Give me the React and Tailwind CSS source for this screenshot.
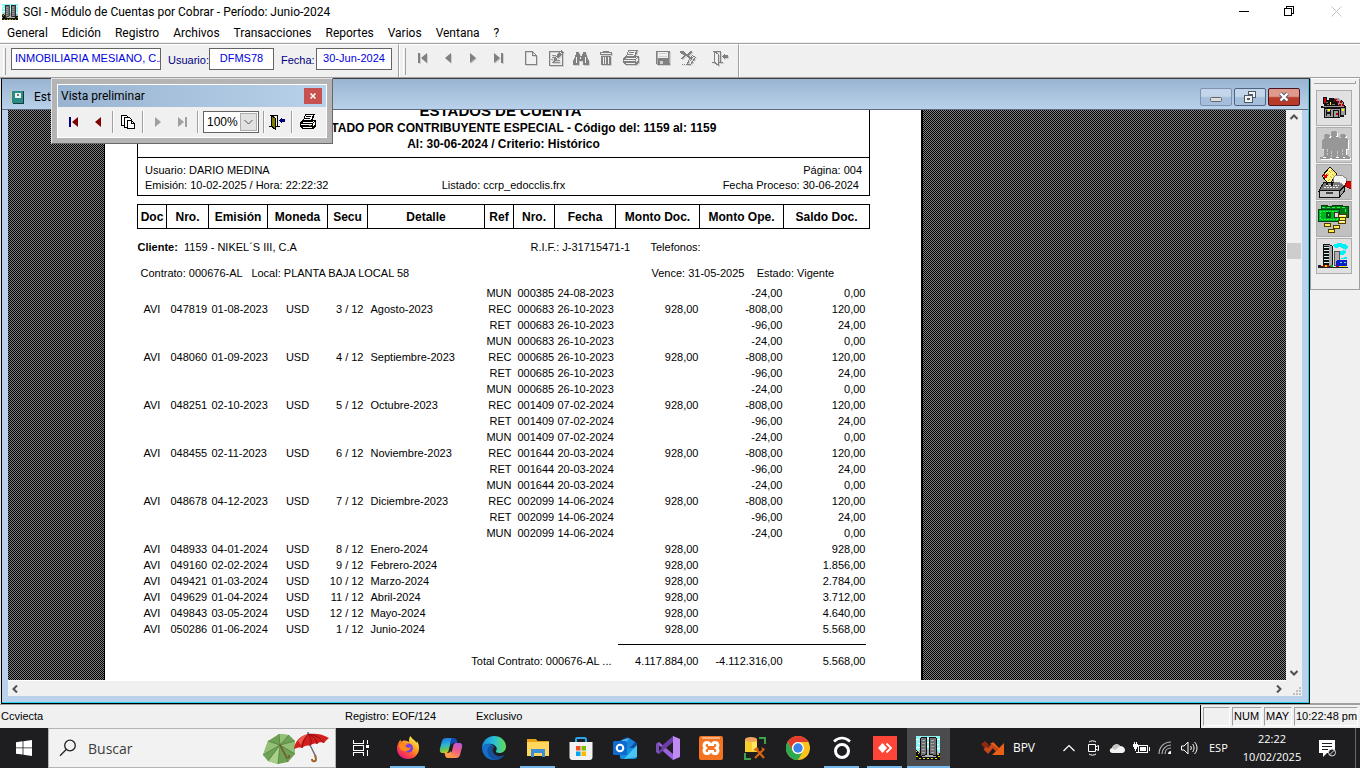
import React from "react";

const ui = "font-['Open_Sans','Noto_Sans',sans-serif]";
const caption = "font-[Roboto,'Noto_Sans',sans-serif]";

const rows = [
  ["", "", "", "", "", "", "MUN", "000385", "24-08-2023", "", "-24,00", "0,00"],
  ["AVI", "047819", "01-08-2023", "USD", "3 / 12", "Agosto-2023", "REC", "000683", "26-10-2023", "928,00", "-808,00", "120,00"],
  ["", "", "", "", "", "", "RET", "000683", "26-10-2023", "", "-96,00", "24,00"],
  ["", "", "", "", "", "", "MUN", "000683", "26-10-2023", "", "-24,00", "0,00"],
  ["AVI", "048060", "01-09-2023", "USD", "4 / 12", "Septiembre-2023", "REC", "000685", "26-10-2023", "928,00", "-808,00", "120,00"],
  ["", "", "", "", "", "", "RET", "000685", "26-10-2023", "", "-96,00", "24,00"],
  ["", "", "", "", "", "", "MUN", "000685", "26-10-2023", "", "-24,00", "0,00"],
  ["AVI", "048251", "02-10-2023", "USD", "5 / 12", "Octubre-2023", "REC", "001409", "07-02-2024", "928,00", "-808,00", "120,00"],
  ["", "", "", "", "", "", "RET", "001409", "07-02-2024", "", "-96,00", "24,00"],
  ["", "", "", "", "", "", "MUN", "001409", "07-02-2024", "", "-24,00", "0,00"],
  ["AVI", "048455", "02-11-2023", "USD", "6 / 12", "Noviembre-2023", "REC", "001644", "20-03-2024", "928,00", "-808,00", "120,00"],
  ["", "", "", "", "", "", "RET", "001644", "20-03-2024", "", "-96,00", "24,00"],
  ["", "", "", "", "", "", "MUN", "001644", "20-03-2024", "", "-24,00", "0,00"],
  ["AVI", "048678", "04-12-2023", "USD", "7 / 12", "Diciembre-2023", "REC", "002099", "14-06-2024", "928,00", "-808,00", "120,00"],
  ["", "", "", "", "", "", "RET", "002099", "14-06-2024", "", "-96,00", "24,00"],
  ["", "", "", "", "", "", "MUN", "002099", "14-06-2024", "", "-24,00", "0,00"],
  ["AVI", "048933", "04-01-2024", "USD", "8 / 12", "Enero-2024", "", "", "", "928,00", "", "928,00"],
  ["AVI", "049160", "02-02-2024", "USD", "9 / 12", "Febrero-2024", "", "", "", "928,00", "", "1.856,00"],
  ["AVI", "049421", "01-03-2024", "USD", "10 / 12", "Marzo-2024", "", "", "", "928,00", "", "2.784,00"],
  ["AVI", "049629", "01-04-2024", "USD", "11 / 12", "Abril-2024", "", "", "", "928,00", "", "3.712,00"],
  ["AVI", "049843", "03-05-2024", "USD", "12 / 12", "Mayo-2024", "", "", "", "928,00", "", "4.640,00"],
  ["AVI", "050286", "01-06-2024", "USD", "1 / 12", "Junio-2024", "", "", "", "928,00", "", "5.568,00"],
];

const cellClass = [
  "pl-[6px]",
  "pl-[4px]",
  "pl-[3px]",
  "text-center",
  "text-right pr-[4px]",
  "pl-[3px]",
  "text-right pr-[2px]",
  "pl-[4px]",
  "pl-[3px]",
  "text-right pr-[1px]",
  "text-right pr-[1px]",
  "text-right pr-[4px]",
];

const headers = ["Doc", "Nro.", "Emisión", "Moneda", "Secu", "Detalle", "Ref", "Nro.", "Fecha", "Monto Doc.", "Monto Ope.", "Saldo Doc."];

/* ---------- small drawings ---------- */

function Svg({ w = 18, h = 18, vb, crisp, className = "", children }) {
  return (
    <svg
      width={w}
      height={h}
      viewBox={vb || `0 0 ${w} ${h}`}
      fill="none"
      aria-hidden="true"
      shapeRendering={crisp ? "crispEdges" : undefined}
      className={"block shrink-0 " + className}
    >
      {children}
    </svg>
  );
}

const First = ({ bar, tri }) => (
  <Svg w={18} h={18}>
    <path d="M4 4h2v10H4z" fill={bar} />
    <path d="M13 4v10L7 9z" fill={tri} />
  </Svg>
);
const Prev = ({ tri }) => (
  <Svg w={18} h={18}>
    <path d="M12 4v10L6 9z" fill={tri} />
  </Svg>
);
const Next = ({ tri }) => (
  <Svg w={18} h={18}>
    <path d="M6 4v10l6-5z" fill={tri} />
  </Svg>
);
const Last = ({ bar, tri }) => (
  <Svg w={18} h={18}>
    <path d="M5 4v10l6-5z" fill={tri} />
    <path d="M12 4h2v10h-2z" fill={bar} />
  </Svg>
);
const Page = () => (
  <Svg w={18} h={18} crisp>
    <path d="M3.500 2.500h7l4 4v9h-11zM10.500 2.500v4h4" stroke="#808080" />
  </Svg>
);
const EditPage = () => (
  <Svg w={18} h={18} crisp>
    <path d="M2.500 2.500h13v14h-13z" stroke="#808080" />
    <path d="M5 6h4M5 8h3M5 13h8M9 11h4M4 10h2" stroke="#909090" />
    <path d="M14 1l3 2-8 9-3 2 1-4z" fill="#808080" />
    <path d="M13 3l2 2M9 8l2 2" stroke="#f0f0f0" />
  </Svg>
);
const Binoculars = () => (
  <Svg w={18} h={18} crisp>
    <path d="M4 3h3v2h1v2h2V5h1V3h3v3h1v3h1v2h1v5h-6v-4H7v4H1v-5h1V9h1V6h1z" fill="#808080" />
    <path d="M4.500 8v6M13.500 8v6M8.500 8v2" stroke="#f0f0f0" />
  </Svg>
);
const Trash = () => (
  <Svg w={18} h={18} crisp>
    <path d="M6 2h6v1h3v3H3V3h3zM4 7h10v9H4z" fill="#808080" />
    <path d="M6.500 8v7M8.500 8v7M11.500 8v7M4 4.500h10" stroke="#f0f0f0" />
  </Svg>
);
const Printer = ({ c, paper = "#f0f0f0", accent }) => (
  <Svg w={18} h={18} crisp>
    <path d="M6 1h10l-2 6h2l1 1v5l-3 3H3l-2-2V9l3-3h1z" fill={c} />
    <path d="M7 2h7l-2 5H5zM4 9h9l2-2v1l-2 2H3z" fill={paper} />
    <path d="M7 3.500h5M6 5.500h5" stroke={c} />
    <path d="M2 11h11v1H2zM4 14h9v1H4zM14 10l2-2v3l-2 2z" fill={paper} />
    {accent && <path d="M10 12h2v1h-2z" fill={accent} />}
  </Svg>
);
const Floppy = () => (
  <Svg w={18} h={18} crisp>
    <path d="M2 2h14v14H3l-1-1z" fill="#808080" />
    <path d="M4 3h10v6H4z" fill="#f0f0f0" />
    <path d="M5 4h8v1H5zM5 7h8v1H5zM6 12h3v3H6z" fill="#d0d0d0" />
    <path d="M3 3v12M15 4v10" stroke="#a8a8a8" />
  </Svg>
);
const Undo = () => (
  <Svg w={18} h={18} crisp>
    <path d="M1 2h3l4 3 4-3 1 1-3 3 2 3h-2l-3-2-4 3H2l3-4-4-2z" fill="#808080" />
    <path d="M13.500 6.500l3 2-5 7-3 0 1-4z" stroke="#808080" />
    <path d="M11 12l3-4" stroke="#808080" strokeDasharray="1 1" />
    <path d="M3 15.500h6" stroke="#808080" strokeDasharray="1 1" />
  </Svg>
);
const Exit = ({ line, door, arrow }) => (
  <Svg w={18} h={18} crisp>
    <path d="M2 2.500h8M9.500 2v11M1 13.500h3M7 13.500h5" stroke={line} />
    <path d="M3 2l4 3v11l-4-3z" fill={door} stroke={line} />
    <path d="M11 7l3-3v2h3v3h-3v2z" fill={arrow} />
  </Svg>
);
const Pages = () => (
  <Svg w={18} h={18} crisp>
    <path d="M2.500 2.500h5l2 2v8h-7z" fill="#fff" stroke="#000" />
    <path d="M5.500 4.500h5l2 2v8h-7z" fill="#fff" stroke="#000" />
    <path d="M8.500 7.500h4l3 3v5h-7zM12.500 7.500v3h3" fill="#fff" stroke="#000" />
  </Svg>
);

const Towers = ({ size }) => (
  <Svg w={size} h={size} vb="0 0 24 24" crisp>
    <path d="M0 0h24v24H0z" fill="#8ff4f4" />
    <path d="M0 3h3M2 7h3M0 11h4M10 2h3M10 6h3M10 10h3M20 3h4M20 8h3M21 12h3" stroke="#fff" />
    <path d="M0 17l5-4h15l4 5v6H0z" fill="#b0b0b0" />
    <path d="M0 14l4 3v3l3 2v2H0zM20 20l4-3v7h-4zM6 21h14v3H6z" fill="#111" />
    <path d="M4.500 2.500l1-1h5v17l-6 2z" fill="#707070" stroke="#111" />
    <path d="M13.500 1.500h6l1 1v17l-7-1z" fill="#707070" stroke="#111" />
    <path d="M6 4.500h3M6 7.500h3M6 10.500h3M6 13.500h3M6 16.500h3M15 4.500h3M15 7.500h3M15 10.500h3M15 13.500h3M15 16.500h3" stroke="#a8a8a8" />
    <path d="M0 15.500h1M2 17.500h1M0 20.500h2M3 22.500h2M7 22.500h2M11 22.500h2M15 22.500h2M19 22.500h2M22 20.500h2M22 18.500h1" stroke="#f0e000" />
  </Svg>
);

const House = () => (
  <Svg w={26} h={22} crisp>
    <path d="M2 0h4v3h2V1h9l5 3 2 5h1v9h-2v2h-4v1H3V11H0V9h3V7H2z" fill="#111" />
    <path d="M3 1h2v5H3z" fill="#c80000" />
    <path d="M13 1h4l5 4 1 5h-4l-3-5z" fill="#b08c8c" />
    <path d="M14 2h2v1h-2zM16 4h2v2h-2zM19 4h2v2h-2zM18 7h2v2h-2zM21 7h2v2h-2zM13 3h1v2h-1z" fill="#a00010" />
    <path d="M2 9h17v1H2zM4 12h15v8H4zM20 11h4v7h-4z" fill="#9c9c9c" />
    <path d="M9 5h1v3H9zM7 12h2v2H7zM21 12h2v2h-2z" fill="#ffff00" />
    <path d="M5 13h1v6H5zM9 13h1v6H9zM6 15h3v2H6zM12 13h1v7h-1zM12 13h6v1h-6zM17 13h1v7h-1z" fill="#111" />
    <path d="M15 16h2v2h-2z" fill="#c00000" />
    <path d="M5 5h2v1H5zM6 7h2v1H6zM11 7h3v1h-3z" fill="#777" />
  </Svg>
);
const People = () => (
  <Svg w={32} h={32} crisp className="drop-shadow-[1px_1px_0_#fff]">
    <path d="M14 2h4v1h1v4h-1v1h2l1 1h2V8h-1V6h1V5h4v1h1v2h-1v1h2l1 2v9h-2v6h2l1 2h1v2H2v-2h2l2-2v-6H4v-9l2-2h1V8H6V6h1V5h4v1h1v2h-1v1h1l1-1h1V7h-1V3h1z" fill="#979797" />
    <path d="M9.500 20v6M13.500 22v6M19.500 22v6M24.500 20v6" stroke="#c8c8c8" strokeDasharray="3 1" />
    <path d="M5 28h3M12 29h2M18 28h3M25 28h2" stroke="#fff" />
  </Svg>
);
const CardFile = () => (
  <Svg w={34} h={34} crisp>
    <path d="M5 11L13 2l7 7-8 11z" fill="#fff58a" stroke="#111" />
    <path d="M12 6l5 5M10 8l5 5M14 5l4 4M11 16l3-3" stroke="#e0b800" strokeDasharray="1 1" />
    <path d="M7 10l3 3M10 10l-3 3" stroke="#f00000" strokeWidth="2" />
    <path d="M7 17h21v4l-5 5H2z" fill="#777" stroke="#111" />
    <path d="M9 20h13M7 22h14" stroke="#eee" strokeDasharray="2 1" />
    <path d="M9 17h2v3H9zM14 17h2v4h-2z" fill="#111" />
    <path d="M16 13l3-3 5 0 5 3 2 6-3 2-5-3-6-1z" fill="#f4f4f4" stroke="#888" />
    <path d="M30 16h4v8l-6-3z" fill="#e00000" stroke="#900" />
    <path d="M2.500 25.500h20v7h-20z" fill="#c8c8c8" stroke="#111" />
    <path d="M22.500 26l5-5v5l-5 6z" fill="#999" stroke="#111" />
    <path d="M9 27h7v2H9z" fill="#444" />
  </Svg>
);
const Money = () => (
  <Svg w={34} h={32} crisp>
    <path d="M4 2h6v1h5V2h10v1h6v11h-6l-3 3H4z" fill="#007a16" stroke="#053d0c" />
    <path d="M1 6h21v12H1z" fill="#00b428" stroke="#053d0c" />
    <path d="M3 8h17v8H3z" stroke="#1dff3a" strokeDasharray="2 1" />
    <path d="M9 9h5v6H9z" fill="#024f0f" />
    <path d="M5 4h24M28 6v6" stroke="#1dff3a" strokeDasharray="3 2" />
    <path d="M11 11h1v2h-1z" fill="#1dff3a" />
    <path d="M17 9h4v5h-4z" fill="#ddd" stroke="#333" />
    <path d="M21.500 11.500h8v3h-8zM22.500 14.500h6v3h-6zM21.500 17.500h7v3h-7zM7.500 20.500h6v3h-6zM16.500 22.500h6v3h-6zM11.500 26.500h6v3h-6z" fill="#fff04a" stroke="#4c3c00" />
    <path d="M23 12.500h5M23 18.500h4" stroke="#fff" />
  </Svg>
);
const City = () => (
  <Svg w={32} h={28} crisp>
    <path d="M14 3l7-2 6 1 3 3-2 3-6-3-5 1zM20 10l6-2 3 2-4 3h-4zM23 16l6-1v2h-6z" fill="#00f0f8" />
    <path d="M5.500 2.500h6l3 2v20h-9z" fill="#a8a8a8" stroke="#111" />
    <path d="M6 4h5v20H6z" fill="#111" />
    <path d="M6 5.500h5M6 8.500h5M6 11.500h5M6 14.500h5M6 17.500h5M6 20.500h5" stroke="#d8f4f4" />
    <path d="M16 10l2-1h3v14h-5z" fill="#b0b0b0" stroke="#555" />
    <path d="M18 19l2-1h9v6H18z" fill="#0b1fc8" />
    <path d="M22 20.500h2M26 20.500h2" stroke="#7df" />
    <path d="M0 23h3v1h3v1h24v1H0z" fill="#222" />
    <path d="M5 23h6v2H5zM18 24h3v1h-3z" fill="#d00000" />
    <path d="M7 23h2v2H7zM22 24h6v1h-6z" fill="#ffe600" />
    <path d="M12 23h3v2h-3z" fill="#13a32a" />
  </Svg>
);

const Book = () => (
  <Svg w={13} h={14} crisp>
    <path d="M1 1h11v12H1z" fill="#2b8a84" />
    <path d="M12 1h1v13H2v-1h10z" fill="#0d3f3c" />
    <path d="M4 3h6v5H4z" fill="#e9f3f2" />
    <path d="M6 4h2v2H6z" fill="#777" />
    <path d="M.500 1v12" stroke="#e2d94c" strokeDasharray="1 1" />
  </Svg>
);

/* ---------- taskbar drawings ---------- */

const Firefox = () => (
  <Svg w={24} h={24}>
    <defs>
      <linearGradient id="ff" x1="20" y1="2" x2="5" y2="22" gradientUnits="userSpaceOnUse">
        <stop stopColor="#fff44f" />
        <stop offset=".4" stopColor="#ff9a1f" />
        <stop offset=".7" stopColor="#ff4a3c" />
        <stop offset="1" stopColor="#e31587" />
      </linearGradient>
    </defs>
    <path d="M12 23C5.500 23 1 18.500 1 12.500 1 9 2.500 6 4.500 3.500L5 6c1-1 2-1.500 3.500-1.500C10 5 12 5 13 6c0-3 0-4 1.500-6 1 3 4 3.500 5.500 6l.5 1 .500-2c1.500 2.500 2.300 5 2 8-.500 6-5 10-11 10z" fill="url(#ff)" />
    <circle cx="12.500" cy="12" r="4.500" fill="#7a3fe0" />
    <path d="M3 9c2.500-2.500 6-2 8.500-.500-2 .500-2.500 1.500-1.500 2.500 2 1.500 4 .500 5 0-1 4-5.500 5.500-8 3.500C5 15 3 12 3 9z" fill="#ff8a1c" />
  </Svg>
);
const Copilot = () => (
  <Svg w={24} h={24}>
    <defs>
      <linearGradient id="cpa" x1="3" y1="2" x2="6" y2="18" gradientUnits="userSpaceOnUse">
        <stop stopColor="#1d6fe0" />
        <stop offset=".45" stopColor="#28b5d8" />
        <stop offset=".75" stopColor="#6ac44a" />
        <stop offset="1" stopColor="#f3c526" />
      </linearGradient>
      <linearGradient id="cpb" x1="20" y1="6" x2="14" y2="22" gradientUnits="userSpaceOnUse">
        <stop stopColor="#b058e8" />
        <stop offset=".5" stopColor="#ee5b8c" />
        <stop offset="1" stopColor="#ff9a4c" />
      </linearGradient>
    </defs>
    <path d="M7 2h8c-2 0-2.500 1-3 3L9.500 15c-.500 1.500-1.500 2-3 2H4c-3 0-3.500-2-3-4.500L3 5c.500-2 2-3 4-3z" fill="url(#cpa)" />
    <path d="M12.500 2H15c2 0 2.500 1 3 3l.500 2H16c-2 0-3 .500-3.500 2L11 7z" fill="#1549b4" />
    <path d="M17 22H9c2 0 2.500-1 3-3l2.500-10c.500-1.500 1.500-2 3-2H20c3 0 3.500 2 3 4.500L21 19c-.500 2-2 3-4 3z" fill="url(#cpb)" />
    <path d="M11.500 22H9c-2 0-2.500-1-3-3l-.500-2H8c2 0 3-.500 3.500-2l1.500 2z" fill="#ff9a4c" />
  </Svg>
);
const Edge = () => (
  <Svg w={24} h={24}>
    <defs>
      <linearGradient id="eg" x1="2" y1="8" x2="23" y2="8" gradientUnits="userSpaceOnUse">
        <stop stopColor="#1793e0" />
        <stop offset=".5" stopColor="#2bc0d4" />
        <stop offset="1" stopColor="#5edc5a" />
      </linearGradient>
    </defs>
    <path d="M0 11.500C.500 5 5.500 0 12 0c7 0 12 5 12 10.500 0 4-3 6.500-6.500 6.500-2.500 0-4-1-3.500-2 1.200-1.300 1-3.500-.500-5C10 6.500 3 7 0 11.500z" fill="url(#eg)" />
    <path d="M0 11.500C2 8 7 7 10.500 9 8.500 10 7.500 12 7.500 14c0 4.500 4 8.500 9 7.500l5-2C19.500 22.500 16 24 12 24 5 24 0 18.500 0 11.500z" fill="#1470cc" />
    <path d="M10.500 9C7 9.500 5 12.500 5.500 16c.500 4 3.500 7 7.500 7.800 4 0 7.500-2 9.500-5-4 2.500-10 1.500-11.500-2.800-.800-2.500 0-4.500 1.500-5.500z" fill="#164f9c" />
  </Svg>
);
const Explorer = () => (
  <Svg w={24} h={24}>
    <path d="M1 3h9l1.500 2H23v4H1z" fill="#e8a317" />
    <path d="M1 6h22v14H1z" fill="#ffd75e" />
    <path d="M5 13h14v8h-3v-4H8v4H5z" fill="#3a8fd8" />
  </Svg>
);
const Store = () => (
  <Svg w={24} h={24}>
    <path d="M7 6V3.500C7 2.500 7.500 2 8.500 2h7c1 0 1.500.500 1.500 1.500V6" stroke="#28a8ea" strokeWidth="2" />
    <path d="M.500 6h23v15c0 2-1 3-3 3h-17c-2 0-3-1-3-3z" fill="#f2f2f2" />
    <path d="M7 10h4.500v4.500H7z" fill="#f25022" />
    <path d="M12.500 10H17v4.500h-4.500z" fill="#7fba00" />
    <path d="M7 15.500h4.500V20H7z" fill="#00a4ef" />
    <path d="M12.500 15.500H17V20h-4.500z" fill="#ffb900" />
  </Svg>
);
const Outlook = () => (
  <Svg w={24} h={24}>
    <path d="M4 6l10-5 10 6v5H4z" fill="#0f4f9e" />
    <path d="M9 4l7-2 5 5-9 8-5-3z" fill="#4db8f5" />
    <path d="M16 2l6 4-7 8-4-4z" fill="#1a83dc" />
    <path d="M7 12h17v8c0 2-1 3-3 3H9c-1.500 0-2-1-2-2z" fill="#1490df" />
    <path d="M24 9v12L11 23z" fill="#48c4f5" />
    <rect y="5" width="14" height="14" rx="1.500" fill="#0f6bd0" />
    <circle cx="7" cy="12" r="3.300" stroke="#fff" strokeWidth="2" />
  </Svg>
);
const VisualStudio = () => (
  <Svg w={24} h={24}>
    <path d="M0 8l3-2 14 12v6L0 9z" fill="#9a63dd" />
    <path d="M0 16l3 2L17 6V0L0 15z" fill="#6a3fa6" />
    <path d="M0 8l3-2v12l-3-2z" fill="#7b4fb8" />
    <path d="M17 0l7 3v18l-7 3z" fill="#c08af5" />
    <path d="M17 7v10l-6-5z" fill="#1f1f1f" />
    <path d="M3 9.500L6 12l-3 3z" fill="#1f1f1f" />
  </Svg>
);
const Xampp = () => (
  <Svg w={24} h={24}>
    <rect width="24" height="24" rx="2" fill="#f37321" />
    <path d="M3 1h18v2H3z" fill="#f8b27f" />
    <path d="M8 6.500c-3 0-4 3.500-1.500 5.500C4 14 5 17.500 8 17.500c2 0 2.500-1 2.500-2h3c0 1 .500 2 2.500 2 3 0 4-3.500 1.500-5.500C20 10 19 6.500 16 6.500c-2 0-2.500 1-2.500 2h-3c0-1-.500-2-2.500-2z" stroke="#fff" strokeWidth="3" />
  </Svg>
);
const DbTool = () => (
  <Svg w={24} h={24}>
    <path d="M16 2h6v6M2 17v6h6" stroke="#3ea34a" strokeWidth="2" />
    <path d="M2 3h12v13H2z" fill="#f5cd2e" />
    <ellipse cx="8" cy="3.500" rx="6" ry="2.500" fill="#f1a660" />
    <path d="M9 6h5v9H9z" fill="#ffe45c" />
    <path d="M12 22l9-9M13 13l8 9" stroke="#d8620e" strokeWidth="2.200" />
    <path d="M10 14l4-3 2 2-2 2zM18 11l4 2-2 2z" fill="#d8620e" />
  </Svg>
);
const Chrome = () => (
  <Svg w={24} h={24}>
    <circle cx="12" cy="12" r="12" fill="#fcc31e" />
    <path d="M1.600 6A12 12 0 0 1 22.400 6H12a6 6 0 0 0-5.200 9z" fill="#e33b2e" />
    <path d="M1.600 6A12 12 0 0 0 12 24l5.200-9A6 6 0 0 1 6.800 15z" fill="#2da94f" />
    <circle cx="12" cy="12" r="6" fill="#fff" />
    <circle cx="12" cy="12" r="4.700" fill="#3b82ea" />
  </Svg>
);
const RingApp = () => (
  <Svg w={24} h={24}>
    <circle cx="12" cy="15" r="6.500" stroke="#fff" strokeWidth="3" />
    <path d="M4 5.500c5-4.500 11-4.500 16 0" stroke="#fff" strokeWidth="2.600" />
  </Svg>
);
const AnyDesk = () => (
  <Svg w={24} h={24}>
    <path d="M0 0h24v24H0z" fill="#ff4438" />
    <path d="M9.500 7L14 12l-4.500 5L5 12z" fill="#fff" />
    <path d="M13.500 7.500l4.500 4.500-4.500 4.500" stroke="#fff" strokeWidth="1.800" />
  </Svg>
);

const apps = [
  ["Firefox", Firefox, 1],
  ["Copilot", Copilot, 0],
  ["Edge", Edge, 0],
  ["Explorador de archivos", Explorer, 1],
  ["Store", Store, 0],
  ["Outlook", Outlook, 0],
  ["Visual Studio", VisualStudio, 0],
  ["XAMPP", Xampp, 0],
  ["Base de datos", DbTool, 0],
  ["Chrome", Chrome, 0],
  ["Asistente", RingApp, 1],
  ["AnyDesk", AnyDesk, 1],
];

const Umbrellas = () => (
  <Svg w={68} h={34}>
    <path d="M1 24L6 10l11-7 10 1 6 6 0 13-7 8-10 2-10-3z" fill="#6fa154" />
    <path d="M1 24L18 14 6 10zM17 3l1 11L27 4zM33 10l-15 4 15 9z" fill="#94bf76" />
    <path d="M18 14l-2 19L6 30z" fill="#a9cf88" />
    <path d="M18 14L1 24M18 14L6 10M18 14l-1-11M18 14l9-10M18 14l15-4M18 14l15 9M18 14l-2 19M18 14L6 30M18 14l8 17" stroke="#4b7a38" strokeWidth=".700" />
    <path d="M18 14l6 11c1 3 4 2 3-1" stroke="#7d5a34" strokeWidth="1.600" />
    <path d="M32 18c1-8 6-13 14-15 8-1 15 0 21 4-2 2-4 3-5 5-3-1-5-1-7 1-3-1-5 0-7 2-3-1-6 0-8 2-3-1-5 0-8 1z" fill="#d3201f" />
    <path d="M40 17c1-6 3-10 6-14M48 15c2-4 1-8-2-12M55 13c0-4-4-8-9-10M62 12c-3-5-9-8-16-9" stroke="#8e0e10" />
    <path d="M36 10c2-4 6-6 10-7-4 4-6 7-7 11z" fill="#f0564c" />
    <path d="M46 1v2M48 14l6 12" stroke="#6d6d78" strokeWidth="1.500" />
    <path d="M53 24l1 4c0 3-4 3-4 0" stroke="#a2622c" strokeWidth="2" />
  </Svg>
);

/* ---------- pieces ---------- */

function TitleBar() {
  return (
    <header className="flex h-[23px] shrink-0 items-center bg-white pl-[2px]">
      <Towers size={16} />
      <h1 className={"pl-[5px] text-[12px] leading-[16px] text-black " + caption}>SGI - Módulo de Cuentas por Cobrar - Período: Junio-2024</h1>
      <div className="ml-auto flex">
        <button aria-label="Minimizar" className="flex h-[22px] w-[45px] items-center justify-center">
          <Svg w={11} h={11} crisp><path d="M0 5.500h10" stroke="#000" /></Svg>
        </button>
        <button aria-label="Restaurar" className="flex h-[22px] w-[45px] items-center justify-center">
          <Svg w={11} h={11} crisp><path d="M.500 2.500h7v7h-7zM2.500 2V.500h7v7H8" stroke="#000" /></Svg>
        </button>
        <button aria-label="Cerrar" className="flex h-[22px] w-[48px] items-center justify-center">
          <Svg w={11} h={11}><path d="M.500.500l10 10M10.500.500l-10 10" stroke="#c4c4c4" /></Svg>
        </button>
      </div>
    </header>
  );
}

function MenuBar() {
  const items = ["General", "Edición", "Registro", "Archivos", "Transacciones", "Reportes", "Varios", "Ventana", "?"];
  return (
    <nav className={"flex h-[19px] shrink-0 items-center gap-[14px] bg-white pl-[7px] text-[12px] leading-[16px] text-black " + caption}>
      {items.map((t) => (
        <button key={t}>{t}</button>
      ))}
    </nav>
  );
}

const Grip = () => <span className="h-[27px] w-[3px] shrink-0 border-r border-l border-r-[#a0a0a0] border-l-white" />;

const field = "h-[22px] border border-[#646464] bg-white pb-[3px] text-[11px] text-[#0000e0] outline-none";

function Toolbar() {
  const tools = [
    ["Primero", <First bar="#808080" tri="#808080" />],
    ["Anterior", <Prev tri="#808080" />],
    ["Siguiente", <Next tri="#808080" />],
    ["Último", <Last bar="#808080" tri="#808080" />],
  ];
  const edit = [
    ["Nuevo", <Page />],
    ["Modificar", <EditPage />],
    ["Buscar registro", <Binoculars />],
    ["Eliminar", <Trash />],
    ["Imprimir", <Printer c="#808080" />],
  ];
  const save = [
    ["Guardar", <Floppy />],
    ["Deshacer", <Undo />],
  ];
  const tb = "flex h-[20px] w-[25px] items-center justify-center drop-shadow-[1px_1px_0_#d0d0d0]";
  const group = (list) =>
    list.map(([name, icon]) => (
      <button key={name} aria-label={name} className={tb}>
        {icon}
      </button>
    ));
  return (
    <div className="flex h-[36px] shrink-0 flex-col bg-[#f0f0f0] pt-px font-['Liberation_Sans',Arial,sans-serif] text-[11px] text-[#000080]">
      <div className="flex flex-1 border-y border-[#a0a0a0]">
        <div className="flex w-[399px] items-start border-t border-r border-t-white border-r-[#a0a0a0] pt-[3px] pl-[3px]">
          <Grip />
          <input aria-label="Empresa" readOnly defaultValue="INMOBILIARIA MESIANO, C.A" className={field + " ml-[5px] w-[150px] pl-[3px]"} />
          <label htmlFor="usuario" className="w-[48px] pt-[4px] pl-[7px]">Usuario:</label>
          <input id="usuario" readOnly defaultValue="DFMS78" className={field + " w-[65px] px-0 text-center"} />
          <label htmlFor="fecha" className="w-[42px] pt-[4px] pl-[7px]">Fecha:</label>
          <input id="fecha" readOnly defaultValue="30-Jun-2024" className={field + " w-[76px] px-0 text-center"} />
        </div>
        <div className="flex w-[340px] items-start border-t border-r border-l border-t-white border-r-[#a0a0a0] border-l-white pt-[3px] pl-[3px]">
          <Grip />
          <div className="flex pl-[4px]">{group(tools)}</div>
          <div className="flex pl-[8px]">{group(edit)}</div>
          <div className="flex pl-[7px]">{group(save)}</div>
          <div className="flex pl-[7px]">{group([["Salir", <Exit line="#808080" door="#f0f0f0" arrow="#808080" />]])}</div>
        </div>
        <div className="flex-1 border-t border-l border-white" />
      </div>
    </div>
  );
}

function PreviewPalette() {
  const pb = "flex h-[24px] w-[24px] items-center justify-center";
  const sep = <span className="h-[22px] w-[2px] border-r border-l border-r-white border-l-[#a0a0a0]" />;
  return (
    <section className="absolute top-0 left-[51px] z-10 flex h-[66px] w-[282px] flex-col border border-t-[#e3e3e3] border-r-[#696969] border-b-[#696969] border-l-[#e3e3e3] bg-[#b4b4b4] p-[5px] text-black">
      <div className="flex flex-1 flex-col border border-white bg-[#f0f0f0]">
        <div className="flex h-[22px] items-center justify-between bg-linear-to-r from-[#99b4d1] to-[#b9d1ea] pr-[4px] pl-[3px]">
          <h2 className={"text-[12px] leading-[16px] " + caption}>Vista preliminar</h2>
          <button aria-label="Cerrar vista preliminar" className="flex h-[16px] w-[18px] items-center justify-center bg-[#c75050]">
            <Svg w={6} h={6}><path d="M.500.500l5 5M5.500.500l-5 5" stroke="#fff" strokeWidth="1.500" /></Svg>
          </button>
        </div>
        <div className="flex flex-1 items-center pl-[4px]">
          <button aria-label="Primera página" className={pb}><First bar="#000080" tri="#800000" /></button>
          <button aria-label="Página anterior" className={pb}><Prev tri="#800000" /></button>
          <span className="flex px-[2px]">{sep}</span>
          <button aria-label="Ir a página" className={pb}><Pages /></button>
          <span className="flex px-[2px]">{sep}</span>
          <button aria-label="Página siguiente" className={pb}><Next tri="#a0a0a0" /></button>
          <button aria-label="Última página" className={pb}><Last bar="#a0a0a0" tri="#a0a0a0" /></button>
          <span className="flex pr-[4px] pl-[3px]">{sep}</span>
          <div className="relative">
            <select aria-label="Zoom" className="block h-[22px] w-[56px] appearance-none border border-[#646464] bg-white pl-[3px] text-[12px] outline-none">
              <option>100%</option>
            </select>
            <span className="pointer-events-none absolute top-[2px] right-[2px] flex h-[18px] w-[17px] items-center justify-center border border-[#adadad] bg-[#e1e1e1]">
              <Svg w={9} h={6}><path d="M.500 1l4 4 4-4" stroke="#555" /></Svg>
            </span>
          </div>
          <span className="flex pl-[4px]">{sep}</span>
          <button aria-label="Cerrar informe" className={pb}><Exit line="#000" door="#808000" arrow="#000080" /></button>
          <span className="flex pr-[3px] pl-[2px]">{sep}</span>
          <button aria-label="Imprimir informe" className={pb}><Printer c="#000" paper="#fff" accent="#808000" /></button>
        </div>
      </div>
    </section>
  );
}

function Report() {
  return (
    <article className="ml-[96px] w-[819px] shrink-0 border-r-2 border-l border-black bg-white pl-[32px] text-[11px] leading-[16px] text-black">
      <div className="w-[733px]">
        <div className="-mt-2 border-x border-b border-black pb-[5px] text-center text-[12px] font-bold">
          <h2 className="pr-[6px] text-[15px] leading-[18px] whitespace-pre">ESTADOS DE CUENTA</h2>
          <p className="pl-[22px]">LISTADO POR CONTRIBUYENTE ESPECIAL - Código del: 1159 al: 1159</p>
          <p>Al: 30-06-2024 / Criterio: Histórico</p>
        </div>
        <div className="grid grid-cols-3 border-x border-b border-black px-[7px] pt-[5px] pb-[2px] leading-[15px]">
          <p className="col-span-2">Usuario: DARIO MEDINA</p>
          <p className="text-right">Página: 004</p>
          <p>Emisión: 10-02-2025 / Hora: 22:22:32</p>
          <p className="text-center">Listado: ccrp_edocclis.frx</p>
          <p className="pr-[3px] text-right">Fecha Proceso: 30-06-2024</p>
        </div>
        <table className="mt-[8px] w-full table-fixed border-collapse">
          <colgroup>
            <col className="w-[29px]" />
            <col className="w-[42px]" />
            <col className="w-[59px]" />
            <col className="w-[60px]" />
            <col className="w-[40px]" />
            <col className="w-[117px]" />
            <col className="w-[29px]" />
            <col className="w-[41px]" />
            <col className="w-[61px]" />
            <col className="w-[84px]" />
            <col className="w-[84px]" />
            <col />
          </colgroup>
          <thead>
            <tr className="h-[24px] text-[12px]">
              {headers.map((h, i) => (
                <th key={i} className="border border-black p-0 text-center font-bold whitespace-nowrap">
                  {h}
                </th>
              ))}
            </tr>
          </thead>
          <tbody className="whitespace-pre">
            <tr className="h-[36px]">
              <td colSpan={7} className="p-0"><b>Cliente:</b>{"  1159 - NIKEL´S III, C.A"}</td>
              <td colSpan={3} className="p-0 pl-[17px]">R.I.F.: J-31715471-1</td>
              <td colSpan={2} className="p-0">
                <div className="-ml-[49px]">Telefonos:</div>
              </td>
            </tr>
            <tr className="h-[20px]">
              <td colSpan={9} className="p-0 pb-[4px] pl-[3px]">{"Contrato: 000676-AL   Local: PLANTA BAJA LOCAL 58"}</td>
              <td colSpan={3} className="p-0 pb-[4px] pl-[36px]">{"Vence: 31-05-2025    Estado: Vigente"}</td>
            </tr>
            {rows.map((r, i) => (
              <tr key={i} className="h-[16px]">
                {r.map((c, j) => (
                  <td key={j} className={"py-0 " + cellClass[j]}>{c}</td>
                ))}
              </tr>
            ))}
          </tbody>
          <tfoot className="whitespace-nowrap">
            <tr className="h-[8px]">
              <td colSpan={9} className="p-0" />
              <td colSpan={3} className="p-0 pr-[4px] pl-[2px]">
                <div className="h-[8px] border-b border-black" />
              </td>
            </tr>
            <tr className="h-[32px]">
              <td colSpan={9} className="p-0 pr-[4px] text-right">Total Contrato: 000676-AL ...</td>
              <td className="p-0 pr-[1px] text-right">4.117.884,00</td>
              <td className="p-0 pr-[1px] text-right">-4.112.316,00</td>
              <td className="p-0 pr-[4px] text-right">5.568,00</td>
            </tr>
          </tfoot>
        </table>
      </div>
    </article>
  );
}

function ReportWindow() {
  const cap = "flex h-[18px] w-[32px] items-center justify-center rounded-[2px] border bg-linear-to-b from-[#c3d5ea] from-45% to-[#a5bedb] to-55%";
  return (
    <section className="flex min-w-0 flex-1 flex-col border-t border-l border-t-[#404040] border-l-[#e8e8e8]">
      <div className="flex min-h-0 flex-1 flex-col border-r border-b border-l border-black">
        <div className="flex min-h-0 flex-1 flex-col border-r border-b border-[#27d3ee] bg-[#b9d1ea] pb-[6px]">
          <div className="flex h-[30px] shrink-0 items-center bg-linear-to-b from-[#99b4d1] to-[#b9d1ea] pt-[5px] pr-[8px] pl-[9px]">
            <Book />
            <h2 className={"pl-[10px] text-[12px] text-black " + caption}>Est</h2>
            <div className="ml-auto flex gap-[2px]">
              <button aria-label="Minimizar ventana" className={cap + " border-[#7b93ae]"}>
                <Svg w={12} h={12}><rect x=".5" y="6.500" width="11" height="4" rx="1" fill="#ddd" stroke="#666" /></Svg>
              </button>
              <button aria-label="Restaurar ventana" className={cap + " border-[#4f6480]"}>
                <Svg w={12} h={12} crisp>
                  <path d="M4.500 3.500v-3h7v6h-3v-3z" fill="#f4f4f4" stroke="#4d5866" />
                  <path d="M.500 4.500h8v7h-8z" fill="#f4f4f4" stroke="#4d5866" />
                  <path d="M3.500 7.500h2v1h-2z" stroke="#4d5866" />
                </Svg>
              </button>
              <button aria-label="Cerrar ventana" className="flex h-[18px] w-[32px] items-center justify-center rounded-[2px] border border-[#4a1420] bg-linear-to-b from-[#e09a8c] from-45% to-[#b93a28] to-55%">
                <Svg w={12} h={10}>
                  <path d="M2.500 1.500l7 7M9.500 1.500l-7 7" stroke="#565a66" strokeWidth="4" />
                  <path d="M2.500 1.500l7 7M9.500 1.500l-7 7" stroke="#fff" strokeWidth="2.300" />
                </Svg>
              </button>
            </div>
          </div>
          <div className="flex min-h-0 flex-1 border-t border-[#5b6b7d] pr-[6px] pl-[6px]">
            <div className="flex min-w-0 flex-1 flex-col">
              <div className="flex min-h-0 flex-1 overflow-hidden bg-[conic-gradient(#808080_25%,#000_0_50%,#808080_0_75%,#000_0)] bg-[length:2px_2px]">
                <Report />
              </div>
              <div className="flex h-[16px] shrink-0 items-center justify-between border-t border-white bg-[#f0f0f0] px-[4px]">
                <button aria-label="Desplazar a la izquierda"><Svg w={6} h={8}><path d="M5 .500L1.500 4 5 7.500" stroke="#505050" strokeWidth="2" /></Svg></button>
                <button aria-label="Desplazar a la derecha"><Svg w={6} h={8}><path d="M1 .500L4.500 4 1 7.500" stroke="#505050" strokeWidth="2" /></Svg></button>
              </div>
            </div>
            <div className="flex w-[16px] shrink-0 flex-col items-center bg-[#f0f0f0] pt-[4px]">
              <button aria-label="Desplazar arriba"><Svg w={8} h={6}><path d="M.500 5L4 1.500 7.500 5" stroke="#505050" strokeWidth="2" /></Svg></button>
              <div className="flex w-full flex-1 flex-col items-center">
                <span className="flex-3" />
                <span className="h-[16px] w-[14px] bg-[#cdcdcd]" />
                <span className="flex-10" />
              </div>
              <button aria-label="Desplazar abajo"><Svg w={8} h={6}><path d="M.500 1L4 4.500 7.500 1" stroke="#505050" strokeWidth="2" /></Svg></button>
              <Svg w={16} h={20} crisp>
                <path d="M13 11h2v2h-2zM10 14h2v2h-2zM13 14h2v2h-2zM7 17h2v2H7zM10 17h2v2h-2zM13 17h2v2h-2z" fill="#bfbfbf" />
              </Svg>
            </div>
          </div>
        </div>
      </div>
    </section>
  );
}

function SidePanel() {
  const items = [
    ["Inmuebles", House, "bg-[#e1e1e1]"],
    ["Clientes", People, "bg-[#cccccc]"],
    ["Archivo", CardFile, "bg-[#c0c0c0]"],
    ["Cobros", Money, "bg-[#c0c0c0]"],
    ["Locales", City, "bg-[#e1e1e1]"],
  ];
  return (
    <aside className="w-[50px] shrink-0 border-b border-b-[#a0a0a0] bg-[#f0f0f0]">
      <div className="flex flex-col items-center gap-px border border-t-white border-r-[#a0a0a0] border-b-[#a0a0a0] border-l-[#a0a0a0] pt-[2px] pb-[15px]">
        <span className="mb-[5px] h-[3px] w-[42px] border-r border-b border-[#a0a0a0]" />
        {items.map(([name, Icon, bg]) => (
          <button key={name} aria-label={name} className={"mr-[2px] flex h-[36px] w-[36px] items-center justify-center border border-[#adadad] " + bg}>
            <Icon />
          </button>
        ))}
      </div>
    </aside>
  );
}

function StatusBar() {
  const cell = "flex h-[19px] items-center border border-t-[#a0a0a0] border-r-white border-b-white border-l-[#a0a0a0] pl-px whitespace-nowrap";
  return (
    <footer className="flex h-[24px] shrink-0 items-center border-t border-[#a0a0a0] bg-[#f0f0f0] font-['Liberation_Sans',Arial,sans-serif] text-[11px] text-black">
      <span className="w-[345px] pl-px">Ccviecta</span>
      <span className="w-[131px]">Registro: EOF/124</span>
      <span>Exclusivo</span>
      <div className="ml-auto flex h-full items-center gap-[2px] border-l border-black pr-[2px] pl-[2px]">
        <span className={cell + " w-[27px]"} />
        <span className={cell + " w-[30px]"}>NUM</span>
        <span className={cell + " w-[28px]"}>MAY</span>
        <span className={cell + " w-[64px]"}>10:22:48 pm</span>
      </div>
    </footer>
  );
}

function Taskbar() {
  const tray = "flex w-[24px] justify-center";
  return (
    <div className="flex h-[40px] shrink-0 bg-[#1e1e20] text-white">
      <button aria-label="Inicio" className="flex w-[48px] items-center justify-center">
        <Svg w={16} h={16}><path d="M0 2.200L6.600 1.300v6.200H0zM7.400 1.200L16 0v7.500H7.400zM0 8.300h6.600v6.300L0 13.700zM7.400 8.300H16V16l-8.600-1.200z" fill="#fff" /></Svg>
      </button>
      <label className="flex w-[288px] items-center border border-[#b4b4b4] bg-[#f2f2f2] pl-[10px]">
        <Svg w={18} h={18}><circle cx="11" cy="6.500" r="5.300" stroke="#222" strokeWidth="1.300" /><path d="M7.200 10.500L1 16.800" stroke="#222" strokeWidth="1.300" /></Svg>
        <input aria-label="Buscar" placeholder="Buscar" className="ml-[11px] w-[150px] text-[14px] outline-none placeholder:text-[#3c3c3c]" />
        <span className="ml-auto pr-[5px]"><Umbrellas /></span>
      </label>
      <button aria-label="Vista de tareas" className="flex w-[50px] items-center justify-center">
        <Svg w={18} h={18} crisp><path d="M1.500 1v3.500h10V1M1.500 17v-3.500h10V17M1.500 6.500h10v5h-10zM15.500 1v4M15.500 11v6" stroke="#fff" /><path d="M14 6h3v3h-3z" fill="#fff" /></Svg>
      </button>
      <div className="grid w-[564px] grid-cols-13">
        {apps.map(([name, Icon, open]) => (
          <button key={name} aria-label={name} className="flex flex-col items-center">
            <span className="flex flex-1 items-center pt-[2px]"><Icon /></span>
            <span className={"h-[2px] w-[35px] " + (open ? "bg-[#76b9ed]" : "")} />
          </button>
        ))}
        <button aria-label="SGI" className="flex flex-col items-center bg-[#4b4b4d]">
          <span className="flex flex-1 items-center pt-[2px]"><Towers size={24} /></span>
          <span className="h-[2px] w-full bg-[#76b9ed]" />
        </button>
      </div>
      <div className="ml-auto flex items-center text-[12px]">
        <button className="flex items-center gap-[8px] pr-[22px]">
          <Svg w={24} h={16}>
            <path d="M0 4l4-3 4 4-3 5z" fill="#8c2a10" />
            <path d="M4 8l3 3 5-6 4 5" stroke="#c8461a" strokeWidth="4" />
            <path d="M9 3h4l8 8M23 3v12H11z" fill="#ee5f16" />
          </Svg>
          BPV
        </button>
        <button aria-label="Mostrar iconos ocultos" className={tray}><Svg w={12} h={8}><path d="M.500 7L6 1.500 11.500 7" stroke="#fff" strokeWidth="1.200" /></Svg></button>
        <button aria-label="Reunirse ahora" className={tray}><Svg w={14} h={16}><path d="M2.500 4.500h7v7h-7zM9.500 7l3-1.500v5L9.500 9M3 2c2-1.500 5-1.500 7 0M3 14c2 1.500 5 1.500 7 0" stroke="#fff" /></Svg></button>
        <button aria-label="OneDrive" className={tray}><Svg w={16} h={11}><path d="M3.500 10C0 10 0 5.500 3 5c1-4 6-5 8-2 3 0 5 2 5 4 0 2-1.500 3-3 3z" fill="#f2f2f2" /><path d="M3 5c1-4 6-5 8-2L6 7z" fill="#c4c4c4" /></Svg></button>
        <button aria-label="Batería" className={tray}><Svg w={17} h={14} crisp><path d="M5.500 4.500h9v7h-9zM16 6v4" stroke="#fff" /><path d="M7 6h6v4H7zM0 3h5v3H4v2H1V6H0zM1 1h1v2H1zM3 1h1v2H3zM2 8h1v4h3v-1H3z" fill="#fff" /></Svg></button>
        <button aria-label="Red" className={tray}><Svg w={14} h={14}><path d="M1 13C1 6 6 1 13 1M4 13c0-5 4-9 9-9M7 13c0-3.500 2.500-6 6-6" stroke="#b5b5b5" strokeWidth="1.200" /><path d="M10 13c0-1.500 1-3 3-3v3z" fill="#fff" /></Svg></button>
        <button aria-label="Volumen" className={tray}><Svg w={17} h={14}><path d="M.500 5v4H3l4 4V1L3 5zM9.500 5c1 1 1 3 0 4M11.500 3c2 2 2 6 0 8M13.500 1c3.300 3 3.300 9 0 12" stroke="#fff" /></Svg></button>
        <span className="w-[41px] pl-[8px] text-[11px]">ESP</span>
        <button className="flex w-[60px] flex-col items-center text-[11px] leading-[18px]">
          <time>22:22</time>
          <time>10/02/2025</time>
        </button>
        <button aria-label="Notificaciones" className="flex w-[50px] justify-center">
          <Svg w={17} h={17}><path d="M0 0h16v13H8l-4 4v-4H0z" fill="#fff" /><path d="M3 3.500h10M3 6.500h10M3 9.500h6" stroke="#1e1e20" /><circle cx="13" cy="12.500" r="3.500" fill="#1e1e20" stroke="#ddd" /><path d="M10.500 15l5-5" stroke="#ddd" /></Svg>
        </button>
        <span className="ml-[3px] h-[40px] w-[5px] border-l border-[#6a6a6a]" />
      </div>
    </div>
  );
}

export default function App() {
  return (
    <div className={"flex h-screen flex-col overflow-hidden bg-[#f0f0f0] " + ui}>
      <TitleBar />
      <MenuBar />
      <Toolbar />
      <main className="relative flex min-h-0 flex-1 font-['Liberation_Sans',Arial,sans-serif]">
        <ReportWindow />
        <SidePanel />
        <PreviewPalette />
      </main>
      <StatusBar />
      <Taskbar />
    </div>
  );
}
